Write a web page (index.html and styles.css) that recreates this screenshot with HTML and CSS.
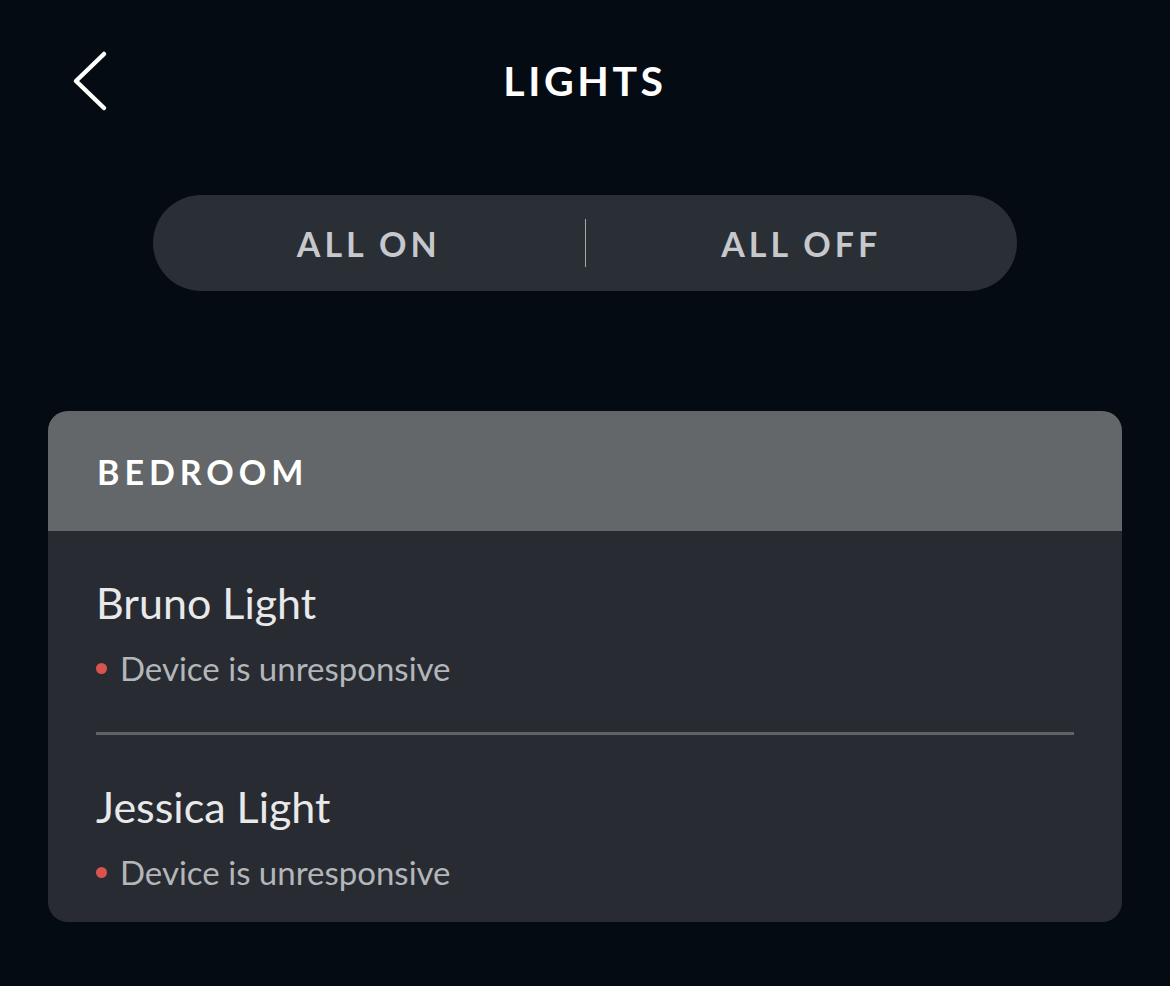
FILE: index.html
```html
<!DOCTYPE html>
<html lang="en">
<head>
<meta charset="utf-8">
<title>Lights</title>
<link rel="stylesheet" href="styles.css">
</head>
<body>
<div class="screen">
  <header class="topbar">
    <button class="back" aria-label="Back">
      <svg width="40" height="64" viewBox="0 0 40 64">
        <path d="M34 5 L6 32 L34 59" fill="none" stroke="#ffffff" stroke-width="4.5" stroke-linecap="round" stroke-linejoin="round"/>
      </svg>
    </button>
    <h1 class="title">LIGHTS</h1>
  </header>

  <div class="toggle">
    <button class="toggle-btn">ALL ON</button>
    <span class="toggle-sep"></span>
    <button class="toggle-btn">ALL OFF</button>
  </div>

  <section class="card">
    <div class="card-head">BEDROOM</div>
    <div class="card-body">
      <div class="device">
        <div class="device-name">Bruno Light</div>
        <div class="device-status"><span class="dot"></span>Device is unresponsive</div>
      </div>
      <div class="divider"></div>
      <div class="device last">
        <div class="device-name">Jessica Light</div>
        <div class="device-status"><span class="dot"></span>Device is unresponsive</div>
      </div>
    </div>
  </section>
</div>
</body>
</html>
```

FILE: styles.css
```css
* { box-sizing: border-box; }
html, body {
  margin: 0;
  padding: 0;
  background: #050b12;
}
body {
  font-family: Lato, "Noto Sans", "Liberation Sans", sans-serif;
  color: #ffffff;
  width: 1170px;
  height: 986px;
  overflow: hidden;
}
.screen {
  display: flex;
  flex-direction: column;
  align-items: center;
}
.topbar {
  position: relative;
  width: 100%;
  height: 162px;
  display: flex;
  align-items: center;
  justify-content: center;
}
.back {
  position: absolute;
  left: 70px;
  top: 49px;
  background: none;
  border: 0;
  padding: 0;
  width: 40px;
  height: 64px;
}
.back svg { display: block; }
.title {
  margin: 0;
  font-size: 41px;
  font-weight: 700;
  letter-spacing: 3.6px;
  line-height: 48px;
  color: #ffffff;
}
.toggle {
  margin-top: 33px;
  width: 864px;
  height: 96px;
  border-radius: 48px;
  background: #2a2e35;
  display: flex;
  align-items: center;
}
.toggle-btn {
  flex: 1;
  background: none;
  border: 0;
  font-family: inherit;
  font-size: 34px;
  font-weight: 700;
  letter-spacing: 4px;
  color: #c6c8cb;
  padding: 0;
  height: 96px;
}
.toggle-sep {
  width: 1px;
  height: 48px;
  background: #a7a9ad;
}
.card {
  margin-top: 120px;
  width: 1074px;
  border-radius: 20px;
  overflow: hidden;
  background: #282b31;
}
.card-head {
  height: 120px;
  background: #63676a;
  display: flex;
  align-items: center;
  padding-left: 49px;
  font-size: 34px;
  font-weight: 700;
  letter-spacing: 5px;
  color: #ffffff;
}
.card-body {
  padding: 0 48px;
}
.device {
  padding-top: 47px;
  padding-bottom: 44px;
}
.device.last { padding-bottom: 30px; }
.device-name {
  font-size: 43px;
  line-height: 50px;
  color: #e8e9ea;
}
.device-status {
  margin-top: 20px;
  font-size: 33px;
  line-height: 40px;
  color: #b3b6ba;
  display: flex;
  align-items: center;
}
.dot {
  width: 11px;
  height: 11px;
  border-radius: 50%;
  background: #d9534f;
  margin-right: 13px;
}
.divider {
  height: 3px;
  background: #5f6266;
}
```
